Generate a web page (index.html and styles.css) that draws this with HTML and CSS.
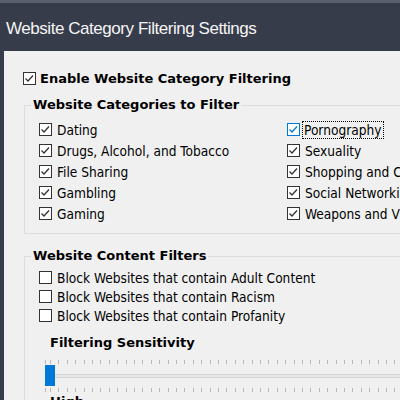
FILE: index.html
```html
<!DOCTYPE html>
<html>
<head>
<meta charset="utf-8">
<link rel="stylesheet" href="styles.css">
</head>
<body>
<div class="window">
  <div class="titlebar"><h1 class="title">Website Category Filtering Settings</h1></div>
  <div class="panel">
    <label class="check main">
      <span class="cb"><svg viewBox="0 0 13 13" width="13" height="13"><polyline points="2.5,6.5 5,9 10,3.5"/></svg></span>
      <span class="lbl">Enable Website Category Filtering</span>
    </label>

    <fieldset class="group cats">
      <legend class="legend">Website Categories to Filter</legend>
      <div class="grid">
        <label class="check row21"><span class="cb"><svg viewBox="0 0 13 13" width="13" height="13"><polyline points="2.5,6.5 5,9 10,3.5"/></svg></span><span class="txt">Dating</span></label>
        <label class="check row21"><span class="cb"><svg viewBox="0 0 13 13" width="13" height="13"><polyline points="2.5,6.5 5,9 10,3.5"/></svg></span><span class="txt">Drugs, Alcohol, and Tobacco</span></label>
        <label class="check row21"><span class="cb"><svg viewBox="0 0 13 13" width="13" height="13"><polyline points="2.5,6.5 5,9 10,3.5"/></svg></span><span class="txt">File Sharing</span></label>
        <label class="check row21"><span class="cb"><svg viewBox="0 0 13 13" width="13" height="13"><polyline points="2.5,6.5 5,9 10,3.5"/></svg></span><span class="txt">Gambling</span></label>
        <label class="check row21"><span class="cb"><svg viewBox="0 0 13 13" width="13" height="13"><polyline points="2.5,6.5 5,9 10,3.5"/></svg></span><span class="txt">Gaming</span></label>
        <label class="check row21"><span class="cb focus"><svg viewBox="0 0 13 13" width="13" height="13"><polyline points="2.5,6.5 5,9 10,3.5"/></svg></span><span class="txt focused">Pornography</span></label>
        <label class="check row21"><span class="cb"><svg viewBox="0 0 13 13" width="13" height="13"><polyline points="2.5,6.5 5,9 10,3.5"/></svg></span><span class="txt">Sexuality</span></label>
        <label class="check row21"><span class="cb"><svg viewBox="0 0 13 13" width="13" height="13"><polyline points="2.5,6.5 5,9 10,3.5"/></svg></span><span class="txt">Shopping and Classifieds</span></label>
        <label class="check row21"><span class="cb"><svg viewBox="0 0 13 13" width="13" height="13"><polyline points="2.5,6.5 5,9 10,3.5"/></svg></span><span class="txt">Social Networking</span></label>
        <label class="check row21"><span class="cb"><svg viewBox="0 0 13 13" width="13" height="13"><polyline points="2.5,6.5 5,9 10,3.5"/></svg></span><span class="txt">Weapons and Violence</span></label>
      </div>
    </fieldset>

    <fieldset class="group content">
      <legend class="legend">Website Content Filters</legend>
      <div class="list">
        <label class="check row19"><span class="cb empty"></span><span class="txt">Block Websites that contain Adult Content</span></label>
        <label class="check row19"><span class="cb empty"></span><span class="txt">Block Websites that contain Racism</span></label>
        <label class="check row19"><span class="cb empty"></span><span class="txt">Block Websites that contain Profanity</span></label>
      </div>
      <div class="sens">Filtering Sensitivity</div>
      <div class="slider">
        <div class="ticks"></div>
        <div class="trackwrap">
          <div class="track"></div>
          <div class="thumb"></div>
        </div>
        <div class="ticks"></div>
      </div>
      <div class="sens high">High</div>
    </fieldset>
  </div>
</div>
</body>
</html>
```

FILE: styles.css
```css
html, body {
  margin: 0;
  padding: 0;
  width: 400px;
  height: 400px;
  overflow: hidden;
  background: #373c4b;
}

.window {
  border-top: 3px solid #5b5f6b;
  display: flex;
  flex-direction: column;
  height: 397px;
}

.titlebar {
  height: 48px;
  box-sizing: border-box;
  padding-top: 3px;
  display: flex;
  align-items: center;
  padding-left: 6px;
  flex-shrink: 0;
}

.title {
  margin: 0;
  font-family: "Liberation Sans", Arial, sans-serif;
  font-weight: normal;
  font-size: 17px;
  letter-spacing: -0.45px;
  color: #f4f4f4;
}

.panel {
  margin-left: 4px;
  flex: 1;
  background: #f0f0f0;
  overflow: hidden;
  padding-top: 21px;
  font-family: "DejaVu Sans Condensed", "DejaVu Sans", sans-serif;
  font-stretch: condensed;
  font-size: 13.6px;
  color: #000;
}

.check {
  display: flex;
  align-items: center;
  white-space: nowrap;
}

.main {
  height: 13px;
  margin-left: 19px;
}

.main .lbl {
  margin-left: 4px;
  font-family: "DejaVu Sans", sans-serif;
  font-stretch: normal;
  font-weight: bold;
  font-size: 13px;
  line-height: 13px;
}

.cb {
  width: 13px;
  height: 13px;
  box-sizing: border-box;
  border: 1px solid #333;
  background: #fff;
  flex-shrink: 0;
}

.cb svg {
  display: block;
  margin: -1px;
  fill: none;
  stroke: #333;
  stroke-width: 1.3;
}

.cb.focus {
  border-color: #0078d7;
}

.cb.focus svg {
  stroke: #0078d7;
}

.txt {
  margin-left: 4px;
  line-height: 16px;
  padding: 0 1px;
}

.txt.focused {
  outline: 1px dotted #000;
  margin-left: 3px;
  padding: 0 2px 0 1px;
}

.group {
  margin: 0 0 0 20px;
  width: 420px;
  border: 1px solid #dcdcdc;
  padding: 0 0 0 14px;
  min-width: 0;
}

.cats {
  margin-top: 12px;
  padding-top: 6px;
  padding-bottom: 9px;
}

.content {
  margin-top: 14px;
  padding-top: 4px;
  padding-bottom: 0;
  height: 200px;
}

.legend {
  margin-left: -8px;
  padding: 0 2px;
  font-family: "DejaVu Sans", sans-serif;
  font-stretch: normal;
  font-weight: bold;
  font-size: 13px;
  line-height: 16px;
}

.grid {
  display: grid;
  grid-template-columns: 248px 1fr;
  grid-template-rows: repeat(5, 21px);
  grid-auto-flow: column;
}

.row21 {
  height: 21px;
}

.row19 {
  height: 19px;
}

.sens {
  margin-left: 11px;
  margin-top: 10px;
  font-family: "DejaVu Sans", sans-serif;
  font-stretch: normal;
  font-weight: bold;
  font-size: 13px;
  line-height: 16px;
}

.sens.high {
  margin-top: 2px;
}

.slider {
  margin-left: 6px;
  margin-top: 9px;
  width: 400px;
  display: flex;
  flex-direction: column;
}

.ticks {
  height: 4px;
  background-image: repeating-linear-gradient(to right, #b8b8b8 0, #b8b8b8 1px, transparent 1px, transparent 8.4px);
  background-position: 5px 0;
}

.trackwrap {
  position: relative;
  height: 24px;
}

.track {
  margin-top: 10px;
  height: 4px;
  box-sizing: border-box;
  border-top: 1px solid #d6d6d6;
  border-bottom: 1px solid #d6d6d6;
  background: #e7e7e7;
}

.thumb {
  position: absolute;
  left: 0;
  top: 1px;
  width: 10px;
  height: 21px;
  background: #0078d7;
}
```
